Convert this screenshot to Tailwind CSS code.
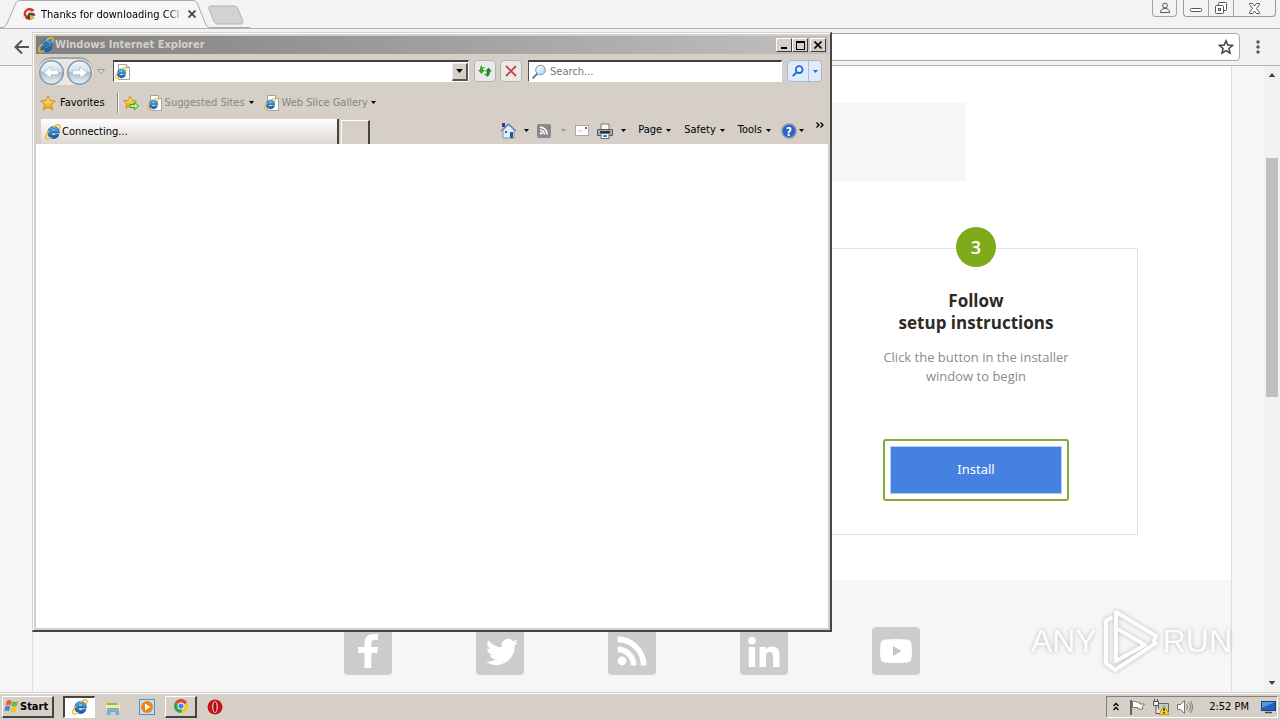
<!DOCTYPE html>
<html lang="en">
<head>
<meta charset="utf-8">
<title>Desktop</title>
<script src="https://cdn.jsdelivr.net/npm/@tailwindcss/browser@4"></script>
</head>
<body class="relative flex h-screen flex-col overflow-hidden bg-[#f3f3f3] font-['DejaVu_Sans_Condensed','DejaVu_Sans',sans-serif] text-[11px] text-black">

<svg class="absolute size-0" aria-hidden="true">
  <defs>
    <linearGradient id="blue" x1="0" y1="0" x2="0" y2="1"><stop offset="0" stop-color="#4fbcf0"/><stop offset="1" stop-color="#0b56a8"/></linearGradient>
    <linearGradient id="glass" x1="0" y1="0" x2="0" y2="1"><stop offset="0" stop-color="#f4f7fa"/><stop offset=".45" stop-color="#d3dfe9"/><stop offset=".5" stop-color="#aebfce"/><stop offset="1" stop-color="#e4f4fb"/></linearGradient>
    <linearGradient id="gold" x1="0" y1="0" x2="0" y2="1"><stop offset="0" stop-color="#ffe98a"/><stop offset="1" stop-color="#f5a300"/></linearGradient>
    <linearGradient id="lens" x1="0" y1="0" x2="1" y2="1"><stop offset="0" stop-color="#fff"/><stop offset="1" stop-color="#a9d3f3"/></linearGradient>
    <symbol id="ie" viewBox="0 0 16 16">
      <path d="M14.300 9H6c.1 1.500 1.100 2.300 2.600 2.300 1 0 1.700-.3 2.100-.9H14c-.7 2.500-2.600 4.100-5.300 4.100-3.500 0-5.900-2.400-5.900-5.900s2.400-6 5.900-6C12.300 2.600 14.500 5 14.300 9zM6 6.900h4.900c-.1-1.200-1-1.800-2.400-1.800S6.200 5.700 6 6.900z" fill="url(#blue)" stroke="#0a4c92" stroke-width=".7"/>
      <path d="M14.300 4.700c.9-1.700 1-3 .2-3.600-1-.8-3.300 0-5.700 1.800M3.800 7.300C1.200 10.600.2 13.700 1.300 14.700c.8.8 2.700.2 4.700-1.200" fill="none" stroke="#f3b91c" stroke-width="1.400" stroke-linecap="round"/>
    </symbol>
    <symbol id="iepage" viewBox="0 0 16 16">
      <path d="M3.500.5h8l3 3v12h-11z" fill="#fff" stroke="#a5a59d"/><path d="M11.500.5v3h3" fill="#e5e5e0" stroke="#a5a59d"/>
      <use href="#ie" x="0" y="3" width="12" height="12"/>
    </symbol>
    <symbol id="star" viewBox="0 0 16 16"><path d="M8 .8l2.200 4.700 5.100.6-3.800 3.500 1 5.100L8 12.200l-4.500 2.500 1-5.100L.7 6.100l5.100-.6z" fill="url(#gold)" stroke="#c98a1b" stroke-linejoin="round"/></symbol>
    <symbol id="down" viewBox="0 0 5 3"><path d="M0 0h5L2.500 3z" fill="currentColor"/></symbol>
    <symbol id="feed" viewBox="0 0 16 16"><circle cx="3" cy="13" r="2.200"/><path d="M.8 7.200a8 8 0 0 1 8 8M.8 2.200a13 13 0 0 1 13 13" fill="none" stroke="currentColor" stroke-width="2.800"/></symbol>
  </defs>
</svg>

<main class="flex min-h-0 flex-1 flex-col">
  <!-- Chrome tab strip -->
  <header class="relative flex h-7 shrink-0 items-start">
    <svg class="absolute left-0 top-0 h-7 w-[250px]" viewBox="0 0 250 28" fill="none"><path d="M0 27.500h2c3 0 4-2 5-4L15.500 4c1-2.500 2-3.500 5-3.500H193c2 0 3.500 1 4.500 3.500l8 19.500c1 3 2 4 5 4H250" fill="#f6f6f6" stroke="#aaa"/><path d="M209 9c-.8-2 .2-3 2-3h23c2 0 3 1 4 3l4.500 11.500c.7 2 0 3.500-2 3.500H218c-2 0-3.500-1-4.300-3z" fill="#d2d2d2" stroke="#b1b1b1"/></svg>
    <div class="relative flex h-7 w-[200px] items-center gap-1 pl-[21px]">
      <svg class="size-4 shrink-0" viewBox="0 0 16 16"><path d="M13.500 4.500A6 6 0 1 0 13 12l-3-2a3 3 0 1 1 .5-4.200z" fill="#d93221"/><path d="M8 6.500l5 .6 1.500 2.500-3.500.7-1 3.200-3-1.200-2 1L6 10z" fill="#5a4636"/><path d="M9 9l4 1-1 3-3 1z" fill="#e7b34c"/><path d="M3 3l3-1.500-1 3zM2 9l3 2-3 .5z" fill="#f6c6b8"/></svg>
      <span class="whitespace-nowrap bg-gradient-to-r from-black from-90% to-[#aaa] bg-clip-text pt-[2px] text-transparent">Thanks for downloading CCl</span>
      <button class="ml-auto grid size-4 shrink-0 place-items-center" aria-label="Close tab"><svg class="size-2" viewBox="0 0 8 8" stroke="#444" stroke-width="1.800"><path d="M.5.5l7 7m0-7l-7 7"/></svg></button>
    </div>
    <div class="ml-auto flex gap-[6px] pr-1">
      <button class="grid h-[17px] w-[25px] place-items-center rounded-b border border-t-0 border-[#a5a5a5]" aria-label="Profile"><svg class="h-3 w-3" viewBox="0 0 12 12" fill="none" stroke="#555"><circle cx="6" cy="3.500" r="2.400"/><path d="M1.500 10.500c0-3 2-4 4.500-4s4.500 1 4.500 4z"/></svg></button>
      <div class="flex h-[17px] divide-x divide-[#a5a5a5] rounded-b border border-t-0 border-[#999]">
        <button class="grid w-[25px] place-items-center pt-1" aria-label="Minimize"><svg class="h-1 w-3" viewBox="0 0 12 4"><rect x=".5" y=".5" width="11" height="3" rx="1" fill="#fff" stroke="#555"/></svg></button>
        <button class="grid w-[25px] place-items-center" aria-label="Restore"><svg class="size-3" viewBox="0 0 12 12" fill="#fff" stroke="#555"><rect x="3.500" y=".5" width="8" height="8" rx="1"/><rect x=".5" y="3.500" width="8" height="8" rx="1"/><rect x="3.500" y="6.500" width="2" height="2"/></svg></button>
        <button class="grid w-[41px] place-items-center" aria-label="Close"><svg class="size-[11px]" viewBox="0 0 11 11" fill="#fff" stroke="#555"><path d="M.5.5h3l2 2.500 2-2.500h3v1L7.500 5.500l3 4v1h-3l-2-2.500-2 2.500h-3v-1l3-4-3-4z"/></svg></button>
      </div>
    </div>
  </header>
  <!-- Chrome toolbar -->
  <div class="flex h-[38px] shrink-0 items-center gap-3 border-y border-[#b2b2b2] bg-[#f2f2f2] pl-[14px] pr-4">
    <button class="grid size-4 place-items-center" aria-label="Back"><svg class="size-4" viewBox="0 0 16 16" fill="none" stroke="#555" stroke-width="2"><path d="M15 8H2m6-6.500L1.500 8 8 14.500"/></svg></button>
    <div class="flex h-7 flex-1 items-center rounded-sm border border-[#a8a8a8] bg-white pr-[5px]">
      <input class="min-w-0 flex-1 outline-none" aria-label="Address">
      <button aria-label="Bookmark"><svg class="size-4" viewBox="0 0 16 16" fill="none" stroke="#444" stroke-width="1.500"><path d="M8 1.800l1.800 4.300 4.700.4-3.600 3 1.200 4.600L8 11.600l-4.100 2.500 1.200-4.600-3.600-3 4.700-.4z"/></svg></button>
    </div>
    <button class="grid w-3 place-items-center" aria-label="Menu"><svg class="h-[14px] w-1" viewBox="0 0 4 14" fill="#555"><circle cx="2" cy="2" r="1.700"/><circle cx="2" cy="7" r="1.700"/><circle cx="2" cy="12" r="1.700"/></svg></button>
  </div>
  <!-- Web page -->
  <div class="flex min-h-0 flex-1 bg-[#f6f6f6]">
    <div class="ml-8 flex flex-1 flex-col border-x border-[#dedede] font-['Open_Sans',sans-serif]">
      <div class="flex h-[514px] shrink-0 flex-col bg-white pl-[93px] pr-[93px] pt-[37px]">
        <div class="mr-[172px] h-[78px] shrink-0 bg-[#f6f6f6]"></div>
        <section class="ml-auto mt-[67px] flex h-[287px] w-[324px] shrink-0 flex-col items-center border border-[#e0e0e0] text-center">
          <div class="-mt-[22px] grid size-10 shrink-0 place-items-center rounded-full bg-[#7faa1b] text-lg font-semibold text-white">3</div>
          <h2 class="mt-[23px] text-[17px] font-bold leading-[22px] text-[#2f2a25]">Follow<br>setup instructions</h2>
          <p class="mt-[14px] text-[13px] leading-[19px] text-[#8b8b8b]">Click the button in the installer<br>window to begin</p>
          <div class="mt-[53px] rounded-[3px] border-2 border-[#86ac35] p-[5px]"><button class="block h-12 w-[172px] border border-[#b4cdf3] bg-[#4481e1] font-['Noto_Sans',sans-serif] text-[13px] text-white">Install</button></div>
        </section>
      </div>
      <nav class="flex justify-center gap-[84px] pt-[47px] text-white" aria-label="Social">
        <a href="#" class="grid size-12 place-items-center rounded bg-[#ccc]" aria-label="Facebook"><svg class="h-[34px] w-5" viewBox="0 0 20 34" fill="#fff"><path d="M6.500 34V19H0v-6h6.500V9.500C6.500 3.500 9.500 0 15 0h5v6h-3.500c-2.500 0-3.200 1-3.200 3.500V13H20l-.8 6h-5.900v15z"/></svg></a>
        <a href="#" class="grid size-12 place-items-center rounded bg-[#ccc] pl-1 pt-[2px]" aria-label="Twitter"><svg class="size-8" viewBox="0 0 24 24" fill="#fff"><path d="M24 4.600a10 10 0 0 1-2.800.8 5 5 0 0 0 2.200-2.700c-1 .6-2 1-3.100 1.200a4.900 4.900 0 0 0-8.400 4.500A14 14 0 0 1 1.700 3.100a4.900 4.900 0 0 0 1.500 6.600c-.8 0-1.600-.2-2.200-.6v.1a4.900 4.900 0 0 0 3.900 4.800 5 5 0 0 1-2.200.1 4.900 4.900 0 0 0 4.600 3.400A9.900 9.900 0 0 1 0 19.500a14 14 0 0 0 21.500-12.400A10 10 0 0 0 24 4.600z"/></svg></a>
        <a href="#" class="grid size-12 place-items-center rounded bg-[#ccc]" aria-label="RSS"><svg class="size-8" fill="currentColor"><use href="#feed"/></svg></a>
        <a href="#" class="grid size-12 place-items-center rounded bg-[#ccc] pt-[2px]" aria-label="LinkedIn"><svg class="h-[30px] w-8" viewBox="0 0 32 30" fill="#fff"><circle cx="4" cy="3.800" r="3.800"/><path d="M.8 10H7.200v20H.8zM11.500 10h6.200v2.700c1-1.800 3.200-3.200 6.200-3.200 6.300 0 7.600 4 7.600 9.500v11h-6.400v-9.800c0-2.500-.3-5.200-3.500-5.200s-3.700 2.500-3.700 5V30h-6.400z"/></svg></a>
        <a href="#" class="grid size-12 place-items-center rounded bg-[#ccc]" aria-label="YouTube"><svg class="h-6 w-8" viewBox="0 0 32 24"><path d="M5 .5Q16-.5 27 .5q4 .5 4.500 4.500.9 7 0 14-.5 4-4.500 4.500-11 1-22 0-4-.5-4.500-4.500-.9-7 0-14Q1 1 5 .5z" fill="#fff"/><path d="M13 7l8.500 5-8.500 5z" fill="#c4c4c4"/></svg></a>
      </nav>
    </div>
    <div class="ml-8 flex w-4 flex-col items-center justify-between bg-[#f1f1f1] py-[7px]">
      <svg class="h-1 w-2 rotate-180 text-[#444]"><use href="#down" width="8" height="4"/></svg>
      <div class="mb-auto mt-[81px] h-[239px] w-3 bg-[#c0c0c0]"></div>
      <svg class="h-1 w-2 text-[#444]"><use href="#down" width="8" height="4"/></svg>
    </div>
  </div>
</main>

<!-- Internet Explorer window -->
<section class="absolute left-8 top-8 flex h-[600px] w-[800px] flex-col border border-b-2 border-r-2 border-[#d5d0c8] border-b-[#454545] border-r-[#454545] bg-[#d5cfc8]" aria-label="Windows Internet Explorer">
  <div class="flex min-h-0 flex-1 flex-col border-l border-t border-white p-[2px]">
    <div class="flex h-[18px] shrink-0 items-center bg-gradient-to-r from-[#808080] to-[#c0c0c0] pl-[2px] pr-[2px]">
      <svg class="mr-px size-4"><use href="#ie"/></svg>
      <h1 class="pt-px font-bold text-[#d5d0c8]">Windows Internet Explorer</h1>
      <div class="ml-auto flex">
        <button class="grid h-[14px] w-4 place-items-center border border-white border-b-[#404040] border-r-[#404040] bg-[#d5cfc8]" aria-label="Minimize"><svg class="h-2 w-2" viewBox="0 0 8 8"><path d="M1 6h6v2H1z"/></svg></button>
        <button class="mr-[2px] grid h-[14px] w-4 place-items-center border border-white border-b-[#404040] border-r-[#404040] bg-[#d5cfc8]" aria-label="Maximize"><svg class="h-[9px] w-[9px]" viewBox="0 0 9 9"><path d="M0 0h9v9H0zM1 2v6h7V2z" fill-rule="evenodd"/></svg></button>
        <button class="grid h-[14px] w-4 place-items-center border border-white border-b-[#404040] border-r-[#404040] bg-[#d5cfc8]" aria-label="Close"><svg class="size-2" viewBox="0 0 8 8" stroke="#000" stroke-width="1.600"><path d="M.5.500l7 7m0-7l-7 7"/></svg></button>
      </div>
    </div>
    <div class="flex h-[34px] shrink-0 items-center pl-[2px] pr-[6px]">
      <div class="flex h-7 items-center gap-px rounded-full border-t-2 border-[#a5a5a5] bg-[#e9e7e4]">
        <button aria-label="Back"><svg class="size-[27px]" viewBox="0 0 27 27"><circle cx="13.500" cy="13.500" r="11.800" fill="url(#glass)" stroke="#8298aa" stroke-width="1.500"/><path d="M6 13.500l7-6v3.800h7.500v4.400H13v3.800z" fill="#fff" stroke="#9cb0c0" stroke-width=".6"/></svg></button>
        <button aria-label="Forward"><svg class="size-[27px]" viewBox="0 0 27 27"><circle cx="13.500" cy="13.500" r="11.800" fill="url(#glass)" stroke="#8298aa" stroke-width="1.500"/><path d="M21 13.500l-7-6v3.800H6.500v4.400H14v3.800z" fill="#fff" stroke="#9cb0c0" stroke-width=".6"/></svg></button>
      </div>
      <button class="ml-1 mr-2 grid w-2 place-items-center" aria-label="Recent pages"><svg class="h-[5px] w-2" viewBox="0 0 8 5"><path d="M.5.500h7L4 4.500z" fill="#ddd" stroke="#999"/></svg></button>
      <div class="flex h-[22px] w-[356px] items-center border border-white border-l-[#505050] border-t-2 border-t-[#404040] bg-white pl-px">
        <svg class="size-4"><use href="#iepage"/></svg>
        <input class="min-w-0 flex-1 px-1 outline-none" aria-label="Address">
        <button class="grid h-[18px] w-4 place-items-center border border-b-2 border-r-2 border-[#eee] border-b-[#555] border-r-[#555] bg-[#d5cfc8]" aria-label="Show addresses"><svg class="h-1 w-[7px]"><use href="#down" width="7" height="4"/></svg></button>
      </div>
      <button class="ml-[5px] grid size-[22px] place-items-center rounded-sm border border-[#aeb4bb] bg-[#eceae8]" aria-label="Refresh"><svg class="size-4" viewBox="0 0 16 16"><path d="M5 2v2.500c1.300-.6 2.300-.7 3.500-.5C7 4.800 6 5.500 6 7h2L4.500 11 1 7h2C3 4.500 3.500 3 5 2z" fill="#36a12c"/><path d="M11.500 4.500L15 8.500h-2c0 3-1 4.800-3.500 5.500v-2.200c-1 .5-2 .5-3 .2C8.500 11.300 10 10.300 10 8.500H8z" fill="#218b22"/></svg></button>
      <button class="ml-1 grid size-[22px] place-items-center rounded-sm border border-[#aeb4bb] bg-[#eceae8]" aria-label="Stop"><svg class="size-3" viewBox="0 0 12 12" stroke="#c9474b" stroke-width="1.900"><path d="M1 1l10 10m0-10L1 11"/></svg></button>
      <div class="ml-[6px] flex h-[22px] min-w-0 flex-1 items-center border border-white border-l-[#505050] border-t-2 border-t-[#404040] bg-white pl-[2px]">
        <svg class="size-4" viewBox="0 0 16 16"><path d="M6.500 9.500l-5 5" stroke="#6c8096" stroke-width="2"/><circle cx="9.500" cy="6" r="4.800" fill="url(#lens)" stroke="#7d8fa3"/></svg>
        <input class="min-w-0 flex-1 pl-[3px] pt-[2px] outline-none placeholder:text-[#777]" placeholder="Search..." aria-label="Search">
      </div>
      <div class="ml-[5px] flex h-[22px] w-[35px] divide-x divide-[#a9bfda] rounded-sm border border-[#a9b7c8] bg-[#dfeafa]">
        <button class="grid w-[21px] place-items-center" aria-label="Go"><svg class="size-3" viewBox="0 0 12 12" fill="#e8f5ff" stroke="#2663cf" stroke-width="1.800"><path d="M4.500 7.500L.8 11.200"/><circle cx="7.200" cy="4.600" r="3.400"/></svg></button>
        <button class="grid flex-1 place-items-center text-[#2c6db8]" aria-label="Search options"><svg class="h-[3px] w-[5px]"><use href="#down" width="5" height="3"/></svg></button>
      </div>
    </div>
    <div class="flex h-[29px] shrink-0 items-center pl-1">
      <button class="flex items-center gap-1"><svg class="size-4"><use href="#star"/></svg><span class="pt-px">Favorites</span></button>
      <div class="ml-3 mr-[5px] h-5 w-px bg-[#8d8a86] shadow-[1px_0_0_#fff]"></div>
      <button class="mr-2" aria-label="Add to favorites bar"><svg class="size-4" viewBox="0 0 16 16"><use href="#star" width="14" height="15"/><path d="M7 9.500h4.500V7l4 4-4 4v-2.500H7z" fill="#b9f28c" stroke="#36a026"/></svg></button>
      <button class="flex items-center gap-[2px] whitespace-nowrap text-[#858585]"><svg class="size-4"><use href="#iepage"/></svg><span class="pt-px">Suggested Sites</span><svg class="ml-[2px] h-[3px] w-[5px] text-black"><use href="#down" width="5" height="3"/></svg></button>
      <button class="ml-[10px] flex items-center gap-[2px] whitespace-nowrap text-[#858585]"><svg class="size-4"><use href="#iepage"/></svg><span class="pt-px">Web Slice Gallery</span><svg class="ml-px h-[3px] w-[5px] text-black"><use href="#down" width="5" height="3"/></svg></button>
    </div>
    <div class="flex h-[27px] shrink-0 items-end pl-[5px]">
      <button class="flex h-[25px] w-[298px] items-center border-r-2 border-[#444] bg-gradient-to-b from-white to-[#dcd8d2] pl-1"><svg class="mr-px size-4"><use href="#ie"/></svg><span class="pt-[2px]">Connecting...</span></button>
      <button class="ml-[2px] h-6 w-[29px] border-l border-r-2 border-t border-white border-r-[#444]" aria-label="New tab"></button>
      <div class="ml-auto flex h-[27px] items-center whitespace-nowrap pr-1">
        <button class="flex items-center gap-[7px]" aria-label="Home"><svg class="size-[17px]" viewBox="0 0 17 17"><path d="M3 8v8h11V8L8.500 3z" fill="#e3eefa" stroke="#8093b8"/><path d="M1 9l7.500-7L16 9" fill="none" stroke="#7187ae" stroke-width="1.600"/><path d="M2 1h3v4H2z" fill="#273baa"/><path d="M10 10h3v6h-3zM5 9h2v2H5z" fill="#325499"/></svg><svg class="h-[3px] w-[5px]"><use href="#down" width="5" height="3"/></svg></button>
        <button class="ml-2 flex items-center gap-[10px]" aria-label="Feeds"><svg class="size-[14px]" viewBox="0 0 14 14"><rect width="14" height="14" rx="2" fill="#898989"/><use href="#feed" x="2.500" y="2" width="9" height="9" fill="#fff" color="#fff"/></svg><svg class="h-[3px] w-[5px] text-[#999]"><use href="#down" width="5" height="3"/></svg></button>
        <button class="ml-[9px]" aria-label="Read mail"><svg class="block h-[11px] w-[14px]" viewBox="0 0 14 11"><rect x=".5" y=".5" width="13" height="10" fill="#fff" stroke="#a9a9a9"/><path d="M10 2h2v2h-2z" fill="#cf4a3d"/><path d="M3 6h5" stroke="#ccc"/></svg></button>
        <button class="ml-2 flex items-center gap-2" aria-label="Print"><svg class="size-4" viewBox="0 0 16 16"><path d="M4 1h8v6H4z" fill="#f7f7f7" stroke="#777"/><path d="M.5 6.500h15v6H.5z" fill="#a7abb0" stroke="#555b63"/><path d="M3 9h10" stroke="#303336" stroke-width="2"/><path d="M4 10.500h8v5H4z" fill="#fff" stroke="#666"/><path d="M6 12h4v2H6z" fill="#3f84c7"/></svg><svg class="h-[3px] w-[5px]"><use href="#down" width="5" height="3"/></svg></button>
        <button class="ml-3 flex items-center gap-1">Page<svg class="h-[3px] w-[5px]"><use href="#down" width="5" height="3"/></svg></button>
        <button class="ml-[13px] flex items-center gap-1">Safety<svg class="h-[3px] w-[5px]"><use href="#down" width="5" height="3"/></svg></button>
        <button class="ml-[13px] flex items-center gap-1">Tools<svg class="h-[3px] w-[5px]"><use href="#down" width="5" height="3"/></svg></button>
        <button class="ml-[10px] flex items-center gap-[2px]" aria-label="Help"><svg class="size-4" viewBox="0 0 16 16"><circle cx="8" cy="8" r="7" fill="#2d63c4" stroke="#8895aa" stroke-width="1.500"/><text x="8" y="12.500" text-anchor="middle" font-size="12" font-weight="bold" fill="#fff">?</text></svg><svg class="h-[3px] w-[5px]"><use href="#down" width="5" height="3"/></svg></button>
        <button class="mb-3 ml-3" aria-label="More commands"><svg class="block h-[6px] w-2" viewBox="0 0 8 6" fill="none" stroke="#000" stroke-width="1.300"><path d="M.5.500L3 3 .5 5.500M4.500.500L7 3 4.500 5.500"/></svg></button>
      </div>
    </div>
    <div class="min-h-0 flex-1 bg-white"></div>
  </div>
</section>

<!-- Watermark -->
<div class="absolute bottom-[47px] right-12 flex items-center font-['Liberation_Sans',sans-serif] text-[32px] leading-none text-white opacity-80 drop-shadow-[0_0_2px_#aaa]">
  <span>ANY</span>
  <svg class="mx-1 h-16 w-[58px]" viewBox="0 0 58 64" fill="none" stroke="#fff" stroke-width="4" stroke-linejoin="round" stroke-linecap="round"><path d="M10 9L5 12v42l9 7L55 34M15 48V3L55 27l-2 5M15 19l29 17L15 52z"/></svg>
  <span>RUN</span>
</div>

<!-- Taskbar -->
<footer class="flex h-7 shrink-0 items-center border-t border-[#d5cfc8] bg-[#d5cfc8] pl-[2px] shadow-[inset_0_1px_0_#fff]">
  <button class="flex h-[22px] w-[52px] items-center gap-px border border-b-2 border-r-2 border-white border-b-[#444] border-r-[#444] pl-px text-[11px] font-bold"><svg class="size-[15px] shrink-0" viewBox="0 0 16 16"><path d="M3 2c2-1.500 3.500-1 5 0L6.700 7c-1.500-1-3-1-5 0z" fill="#e85b28"/><path d="M9 2.500c2 1.200 4 1 6 0L13.500 7.500c-2 1-4 1-5.800 0z" fill="#76b82c"/><path d="M1.500 8c2-1 3.500-1 5 0L5.200 13c-1.500-1-3-1-5 0z" fill="#3c86d7"/><path d="M7.500 8.500c2 1 4 1 5.800 0L12 13.500c-2 1-4 1-5.800 0z" fill="#f6c319"/></svg><span class="pt-[2px]">Start</span></button>
  <button class="ml-[9px] grid h-[22px] w-8 place-items-center border border-l-2 border-t-2 border-white border-l-[#444] border-t-[#444] bg-white" aria-label="Internet Explorer"><svg class="size-4"><use href="#ie"/></svg></button>
  <button class="ml-[10px]" aria-label="Explorer"><svg class="block size-4" viewBox="0 0 16 16"><path d="M1 2h5l1 2h8v9H1z" fill="#f2d46a"/><path d="M2 4h10v2H2z" fill="#73c17c"/><path d="M1 6h14v6H1z" fill="#fae9a0"/><path d="M2.500 15.500V9.500h11v6H11v-3H5v3z" fill="#75b9e4" stroke="#4b91c0" stroke-width=".6"/></svg></button>
  <button class="ml-[18px]" aria-label="Media Player"><svg class="block size-4" viewBox="0 0 16 16"><rect x=".5" y=".5" width="15" height="15" fill="#c4e0f5" stroke="#4c91cf"/><circle cx="8" cy="8" r="6" fill="#f48211"/><path d="M6 4.500L11.500 8 6 11.500z" fill="#fff"/></svg></button>
  <button class="ml-[10px] grid h-[22px] w-8 place-items-center border border-b-2 border-r-2 border-white border-b-[#444] border-r-[#444]" aria-label="Chrome"><svg class="size-[14px]" viewBox="0 0 16 16"><circle cx="8" cy="8" r="8" fill="#f3c623"/><path d="M8 8L1 4a8 8 0 0 1 14 0z" fill="#df4535"/><path d="M8 8v0L1 4a8 8 0 0 0 6.500 12L11 9z" fill="#36a352"/><circle cx="8" cy="8" r="4" fill="#fff"/><circle cx="8" cy="8" r="3" fill="#4584ed"/></svg></button>
  <button class="ml-[10px]" aria-label="Opera"><svg class="block size-4" viewBox="0 0 16 16"><circle cx="8" cy="8" r="7.500" fill="#c5151b"/><ellipse cx="8" cy="8" rx="2.700" ry="5.700" fill="#fff"/><ellipse cx="8" cy="8" rx="1.700" ry="5" fill="#a20e13"/></svg></button>
  <div class="ml-auto mr-[2px] flex h-[22px] items-center border border-white border-l-[#808080] border-t-[#808080] pl-[6px] pr-px">
    <svg class="h-[9px] w-[6px]" viewBox="0 0 6 9" fill="none" stroke="#000" stroke-width="1.300"><path d="M.5 4L3 1.500 5.500 4M.5 8L3 5.500 5.500 8"/></svg>
    <svg class="ml-[10px] size-4" viewBox="0 0 16 16"><path d="M2 1v15" stroke="#666" stroke-width="2"/><path d="M3.500 2.500c3-1 4 1 6 1h1v1.500h5L13 8l1 2H9V8.500H3.500z" fill="#fff" stroke="#777"/></svg>
    <svg class="ml-2 size-4" viewBox="0 0 16 16"><path d="M5.500 4.500h10v8h-10z" fill="#b9cde0" stroke="#666"/><path d="M.5 2.500h5v4h-5zM3 6.500v8h5M1.500 0v2.500M4.500 0v2.500" fill="#eee" stroke="#555"/><path d="M11 6l5 9.500H6z" fill="#ffd21e" stroke="#a98b00" stroke-width=".7"/><path d="M11 9v3M11 13v1.500" stroke="#000" stroke-width="1.200"/></svg>
    <svg class="ml-2 size-4" viewBox="0 0 16 16" fill="none" stroke="#777"><path d="M.5 5.500h3l4-4v13l-4-4h-3z" fill="#fff"/><path d="M9.500 5.500q2 2.500 0 5M11.500 3.500q4 4.500 0 9M13.500 2q4 6 0 12"/></svg>
    <time class="ml-4 whitespace-nowrap pt-[2px]">2:52 PM</time>
    <svg class="ml-3 h-[14px] w-[15px]" viewBox="0 0 15 14"><rect x=".5" y="1.500" width="14" height="9" fill="#1d63bd" stroke="#22436f"/><path d="M1 2h13L1 8z" fill="#4f9ae6"/><path d="M4 12.500h7" stroke="#444" stroke-width="1.500"/></svg>
  </div>
</footer>
</body>
</html>
